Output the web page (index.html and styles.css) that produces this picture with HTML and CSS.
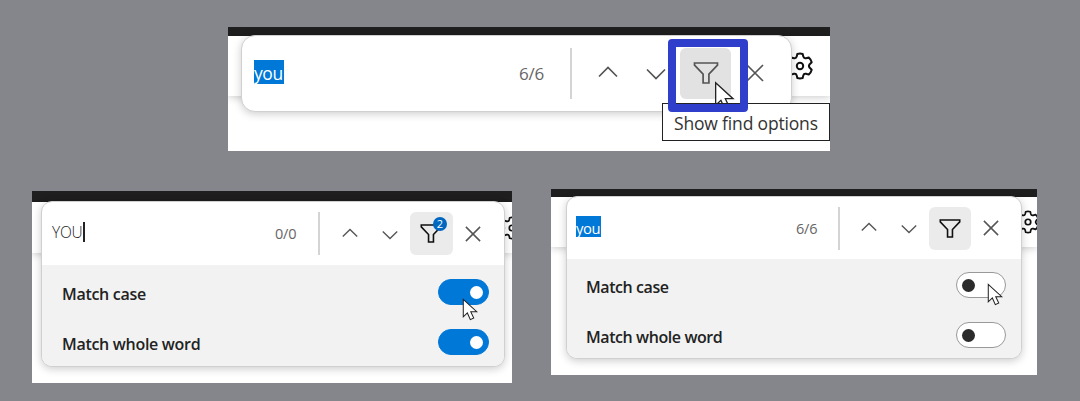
FILE: index.html
```html
<!DOCTYPE html>
<html lang="en">
<head>
<meta charset="utf-8">
<title>Find options</title>
<link rel="stylesheet" href="styles.css">
</head>
<body>
<svg class="defs" aria-hidden="true">
  <symbol id="up" viewBox="0 0 20 12"><path d="M1 10.500 10 1.500l9 9"/></symbol>
  <symbol id="down" viewBox="0 0 20 12"><path d="M1 1.500l9 9 9-9"/></symbol>
  <symbol id="funnel" viewBox="0 0 26 22"><path d="M1.500 1h23v2.200l-8.600 9V21h-5.800v-8.800l-8.600-9z"/></symbol>
  <symbol id="cross" viewBox="0 0 18 18"><path d="M1 1l16 16M17 1L1 17"/></symbol>
  <symbol id="gear" viewBox="0 0 28 28"><path d="M11.300 2Q14 1.200 16.700 2L17.300 4.600Q17.900 6.700 20 6.200L22.800 5.400Q25 7.300 25.700 10.200L23.700 12.200Q22.200 14 23.700 15.800L25.700 17.800Q25 20.700 22.800 22.600L20 21.800Q17.900 21.300 17.300 23.400L16.700 26Q14 26.800 11.300 26L10.700 23.400Q10.100 21.300 8 21.800L5.200 22.600Q3 20.700 2.300 17.800L4.300 15.800Q5.800 14 4.300 12.200L2.300 10.200Q3 7.300 5.200 5.400L8 6.200Q10.100 6.700 10.700 4.600Z"/><circle cx="14" cy="14" r="3.200"/></symbol>
  <symbol id="cursor" viewBox="0 0 20 28"><path d="M1.500 1.500v20.500l4.800-4.500 3.500 7.800 4-1.800-3.500-7.500h7z"/></symbol>
</svg>
<main class="board">
  <section class="shot shot-top">
    <div class="titlebar"></div>
    <div class="toolbar"><svg class="gear"><use href="#gear"/></svg></div>
    <div class="finder">
      <div class="row">
        <div class="query"><span class="selected">you</span></div>
        <div class="count">6/6</div>
        <div class="divider"></div>
        <div class="btn up"><svg class="chev"><use href="#up"/></svg></div>
        <div class="btn down"><svg class="chev"><use href="#down"/></svg></div>
        <div class="btn filter"><svg class="funnel"><use href="#funnel"/></svg></div>
        <div class="btn close"><svg class="cross"><use href="#cross"/></svg></div>
      </div>
    </div>
    <svg class="cursor"><use href="#cursor"/></svg>
    <div class="tooltip"><span>Show find options</span></div>
    <div class="highlight"></div>
  </section>
  <div class="pair">
    <section class="shot shot-on">
      <div class="titlebar"></div>
      <div class="toolbar"><svg class="gear"><use href="#gear"/></svg></div>
      <div class="finder">
        <div class="row">
          <div class="query"><span class="typed">YOU</span></div>
          <div class="count">0/0</div>
          <div class="divider"></div>
          <div class="btn up"><svg class="chev"><use href="#up"/></svg></div>
          <div class="btn down"><svg class="chev"><use href="#down"/></svg></div>
          <div class="btn filter"><svg class="funnel"><use href="#funnel"/></svg><span class="badge">2</span></div>
          <div class="btn close"><svg class="cross"><use href="#cross"/></svg></div>
        </div>
        <div class="options">
          <div class="option"><span class="label">Match case</span><span class="toggle on"></span></div>
          <div class="option"><span class="label">Match whole word</span><span class="toggle on"></span></div>
        </div>
      </div>
      <svg class="cursor"><use href="#cursor"/></svg>
    </section>
    <section class="shot shot-off">
      <div class="titlebar"></div>
      <div class="toolbar"><svg class="gear"><use href="#gear"/></svg></div>
      <div class="finder">
        <div class="row">
          <div class="query"><span class="selected">you</span></div>
          <div class="count">6/6</div>
          <div class="divider"></div>
          <div class="btn up"><svg class="chev"><use href="#up"/></svg></div>
          <div class="btn down"><svg class="chev"><use href="#down"/></svg></div>
          <div class="btn filter"><svg class="funnel"><use href="#funnel"/></svg></div>
          <div class="btn close"><svg class="cross"><use href="#cross"/></svg></div>
        </div>
        <div class="options">
          <div class="option"><span class="label">Match case</span><span class="toggle"></span></div>
          <div class="option"><span class="label">Match whole word</span><span class="toggle"></span></div>
        </div>
      </div>
      <svg class="cursor"><use href="#cursor"/></svg>
    </section>
  </div>
</main>
</body>
</html>
```
FILE: styles.css
```css
* { box-sizing: border-box; }
body { margin: 0; background: #85868b; font-family: "Open Sans", "Noto Sans", sans-serif; color: #222; }
.defs { position: absolute; width: 0; height: 0; }
svg { display: block; flex: none; fill: none; stroke: #555; stroke-width: 1.7; }
.board { width: 1080px; height: 401px; padding-top: 27px; overflow: hidden; }
.shot { position: relative; overflow: hidden; background: #fff; }
.shot-top { width: 602px; height: 124px; margin-left: 228px; }
.pair { display: flex; align-items: flex-start; gap: 39px; padding: 38px 0 0 32px; }
.shot-on { width: 480px; height: 192px; margin-top: 2px; }
.shot-off { width: 486px; height: 186px; }

.titlebar { height: 9px; background: #1f1f1f; }
.shot-on .titlebar { height: 11px; }
.shot-off .titlebar { height: 8px; }
.toolbar { display: flex; justify-content: flex-end; height: 60px; box-shadow: 0 1px 8px rgba(0,0,0,.22); }
.shot-on .toolbar { height: 51px; }
.shot-off .toolbar { height: 50px; }
.gear { width: 28px; height: 28px; margin: 16px 16px 0 0; stroke: #111; stroke-width: 2; stroke-linejoin: round; }
.shot-on .gear { width: 24px; height: 24px; margin: 14px -12px 0 0; }
.shot-off .gear { width: 24px; height: 24px; margin: 13px -3px 0 0; }

.finder { position: absolute; left: 13px; top: 8px; width: 551px; height: 77px; border: 1px solid #d0d0d0; border-radius: 14px; background: #fff; box-shadow: 0 2px 8px rgba(0,0,0,.2); overflow: hidden; }
.shot-on .finder { left: 9px; top: 10px; width: 464px; height: 166px; border-radius: 11px; }
.shot-off .finder { left: 15px; top: 7px; width: 456px; height: 163px; border-radius: 11px; }
.row { display: flex; align-items: center; height: 74px; padding-left: 12px; }
.shot-on .row { height: 63px; padding-left: 10px; }
.shot-off .row { height: 62px; padding-left: 9px; }

.query { width: 265px; }
.selected { display: block; width: 30px; height: 24px; line-height: 27px; margin-top: -2px; background: #0078d7; color: #fff; font-size: 17.5px; letter-spacing: -.4px; }
.count { width: 51px; font-size: 17px; letter-spacing: -.2px; color: #666; }
.divider { width: 2px; height: 51px; background: #d4d4d4; }
.btn { display: flex; align-items: center; justify-content: center; width: 48px; height: 51px; }
.up { margin-left: 12px; }
.up svg { margin-bottom: 2px; }
.down svg { margin-top: 2px; }
.filter { position: relative; width: 51px; border-radius: 6px; background: #e2e2e2; }
.chev { width: 20px; height: 12px; }
.funnel { width: 26px; height: 22px; }
.cross { width: 18px; height: 18px; }

.shot-on .query { width: 223px; }
.typed { display: block; width: 33px; height: 20px; line-height: 20px; border-right: 2px solid #222; margin-top: -3px; font-size: 15.5px; font-weight: 300; letter-spacing: -.3px; }
.pair .count { width: 43px; font-size: 14.5px; letter-spacing: -.2px; }
.pair .divider { height: 43px; }
.pair .btn { width: 40px; height: 43px; }
.pair .up { margin-left: 10px; }
.pair .filter { width: 43px; background: #ebebeb; }
.pair .filter svg { width: 22px; height: 19px; margin-right: 2px; stroke: #111; stroke-width: 1.9; }
.pair .chev { width: 16px; height: 10px; }
.pair .cross { width: 16px; height: 16px; }
.shot-off .query { width: 220px; }
.shot-off .count { width: 42px; }
.shot-off .up { margin-left: 9px; }
.shot-off .selected { width: 25px; height: 21px; line-height: 24px; font-size: 14.8px; margin-top: -3px; }
.shot-off .filter { width: 42px; }
.shot-off .filter svg { margin-right: 0; }
.badge { position: absolute; right: 6px; top: 5px; width: 14px; height: 14px; border-radius: 50%; background: #0067c0; color: #fff; font-size: 11px; line-height: 14px; text-align: center; }

.options { display: flex; flex-direction: column; height: 102px; padding: 2px 15.5px 0 20px; background: #f2f2f2; }
.shot-off .options { height: 101px; padding: 1px 15px 0 19px; }
.option { display: flex; align-items: center; justify-content: space-between; height: 50px; }
.label { font-size: 16px; font-weight: 600; letter-spacing: -.3px; padding-top: 3px; }
.shot-off .label { letter-spacing: -.42px; }
.toggle { display: flex; align-items: center; width: 51px; height: 26px; padding: 0 5px; border: 1px solid #999; border-radius: 13px; background: #fff; }
.shot-off .toggle { width: 50px; }
.toggle::before { content: ""; width: 13px; height: 13px; border-radius: 50%; background: #2b2b2b; }
.toggle.on { justify-content: flex-end; border-color: #0078d7; background: #0078d7; }
.toggle.on::before { background: #fff; }

.cursor { position: absolute; left: 486px; top: 54px; width: 22px; height: 31px; fill: #fff; stroke: #222; stroke-width: 1.2; }
.shot-on .cursor { left: 430px; top: 107px; width: 17px; height: 24px; }
.shot-off .cursor { left: 436px; top: 94px; width: 17px; height: 24px; }
.tooltip { position: absolute; left: 434px; top: 76px; display: flex; align-items: center; width: 168px; height: 38px; padding: 1px 0 0 11px; border: 1px solid #222; background: #fff; color: #333; font-size: 17.5px; letter-spacing: -.17px; white-space: nowrap; }
.highlight { position: absolute; left: 440px; top: 12px; width: 80px; height: 73px; border: 8px solid #303fcb; border-radius: 4px; }
```
